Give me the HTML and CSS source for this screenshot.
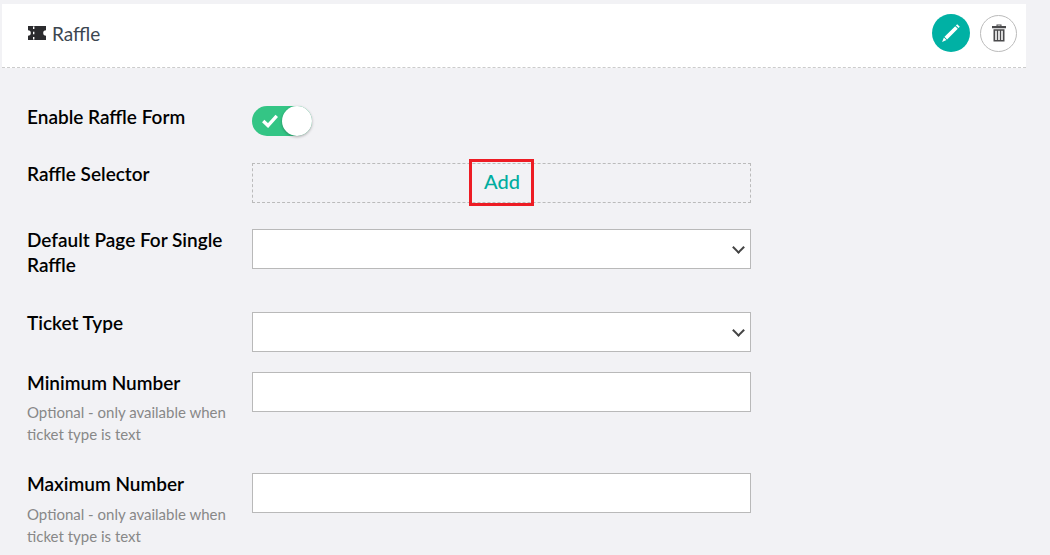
FILE: index.html
```html
<!DOCTYPE html>
<html lang="en">

<head>
    <meta charset="UTF-8">
    <title>Raffle</title>
    <link rel="stylesheet" href="styles.css">
</head>

<body>
    <div class="panel">
        <div class="panel-header">
            <div class="panel-title">
                <svg class="ticket-icon" width="20" height="16" viewBox="0 0 20 16">
                    <path fill="#2b2b2e" d="M1 1h18v4.200a2.800 2.800 0 0 0 0 5.600V15H1v-4.200a2.800 2.800 0 0 0 0-5.600z"/>
                    <path fill="#fff" d="M6 1.500h1.400v2.600H6zM6 6.700h1.400v2.600H6zM6 11.900h1.400v2.600H6z"/>
                </svg>
                <span>Raffle</span>
            </div>
            <div class="panel-actions">
                <button class="round-btn edit-btn" type="button" aria-label="Edit">
                    <svg width="20" height="20" viewBox="0 0 20 20">
                        <path fill="#fff" d="M16.200 1.200l2.600 2.600-1.300 1.300-2.600-2.600zM14.200 3.200l2.600 2.600L6.100 16.400l-2.600-2.600zM2.900 14.500l2.600 2.600-4.400 1.800z"/>
                    </svg>
                </button>
                <button class="round-btn delete-btn" type="button" aria-label="Delete">
                    <svg width="14" height="18" viewBox="0 0 14 18">
                        <path fill="#4a4a4c" d="M4.500 2V.5h5V2H14v2.300H0V2zM5.500 2h3v-.6h-3z"/>
                        <path fill="#4a4a4c" fill-rule="evenodd" d="M1.500 5.300h11V17.500h-11zM3.200 6.800v9.200h1.600V6.800zM6.200 6.800v9.200h1.600V6.800zM9.200 6.800v9.200h1.600V6.800z"/>
                    </svg>
                </button>
            </div>
        </div>

        <form class="form">
            <div class="row row-toggle">
                <div class="label-col"><label class="field-label">Enable Raffle Form</label></div>
                <div class="toggle">
                    <svg class="toggle-check" width="16" height="14" viewBox="0 0 16 14">
                        <path fill="none" stroke="#fff" stroke-width="3.400" d="M1.200 7l4.800 4.600L14.800 1.800"/>
                    </svg>
                    <span class="toggle-knob"></span>
                </div>
            </div>

            <div class="row row-selector">
                <div class="label-col"><label class="field-label">Raffle Selector</label></div>
                <div class="add-box"><a class="add-link" href="#">Add</a></div>
            </div>

            <div class="row row-page">
                <div class="label-col"><label class="field-label">Default Page For Single Raffle</label></div>
                <div class="select-box"><select class="field"></select></div>
            </div>

            <div class="row">
                <div class="label-col"><label class="field-label">Ticket Type</label></div>
                <div class="select-box"><select class="field"></select></div>
            </div>

            <div class="row row-number">
                <div class="label-col">
                    <label class="field-label">Minimum Number</label>
                    <p class="help">Optional - only available when ticket type is text</p>
                </div>
                <input class="field" type="text">
            </div>

            <div class="row row-number">
                <div class="label-col">
                    <label class="field-label">Maximum Number</label>
                    <p class="help">Optional - only available when ticket type is text</p>
                </div>
                <input class="field" type="text">
            </div>
        </form>
    </div>
</body>

</html>
```

FILE: styles.css
```css
html,
body {
    height: 555px;
    overflow: hidden;
}

body {
    margin: 0;
    background-color: #f2f2f5;
    font-family: Lato, sans-serif;
    color: #000;
}

.panel {
    width: 1024px;
    margin: 4px 0 0 2px;
}

.panel-header {
    display: flex;
    align-items: center;
    justify-content: space-between;
    box-sizing: border-box;
    height: 64px;
    padding: 0 9px 5px 25px;
    background-color: #fff;
    border-bottom: 1px dashed #ccc;
}

.panel-title {
    display: flex;
    align-items: center;
    gap: 5px;
    font-size: 19px;
    color: #3c4650;
}

.panel-actions {
    display: flex;
    align-items: center;
    gap: 10px;
}

.round-btn {
    display: flex;
    align-items: center;
    justify-content: center;
    box-sizing: border-box;
    padding: 0;
    border-radius: 50%;
    cursor: pointer;
}

.edit-btn {
    width: 38px;
    height: 38px;
    background-color: #00b1a4;
    border: none;
}

.delete-btn {
    width: 37px;
    height: 37px;
    background-color: #fff;
    border: 1px solid #bbb;
}

.form {
    padding: 38px 0 0 25px;
}

.row {
    display: flex;
    margin-bottom: 20px;
}

.row-toggle {
    margin-bottom: 27px;
}

.row-selector {
    margin-bottom: 26px;
}

.row-page {
    min-height: 63px;
}

.row-number {
    margin-bottom: 28px;
}

.label-col {
    flex: none;
    width: 225px;
    box-sizing: border-box;
    padding-right: 20px;
}

.field-label {
    display: block;
    font-size: 19px;
    font-weight: 600;
    line-height: 25px;
    margin-top: -2px;
}

.help {
    margin: 6.400px 0 0;
    font-size: 15px;
    line-height: 22px;
    color: #888;
}

.toggle {
    position: relative;
    width: 60px;
    height: 30px;
    border-radius: 15px;
    background-color: #34c585;
}

.toggle-check {
    position: absolute;
    top: 8px;
    left: 10px;
}

.toggle-knob {
    position: absolute;
    top: 0;
    right: 0;
    width: 30px;
    height: 30px;
    border-radius: 50%;
    background-color: #fff;
    box-shadow: 0 1px 3px rgba(0, 0, 0, 0.3);
}

.add-box {
    display: flex;
    justify-content: center;
    box-sizing: border-box;
    width: 499px;
    height: 40px;
    border: 1px dashed #bbb;
}

.add-link {
    display: block;
    box-sizing: border-box;
    width: 65px;
    height: 47px;
    line-height: 38px;
    margin-top: -5px;
    padding-left: 1px;
    text-align: center;
    border: 3px solid #ed1c24;
    font-size: 20px;
    font-weight: 500;
    color: #00ad9f;
    text-decoration: none;
}

.select-box {
    position: relative;
}

.select-box::after {
    content: "";
    position: absolute;
    top: 14px;
    right: 8px;
    width: 7px;
    height: 7px;
    border-right: 2px solid #444;
    border-bottom: 2px solid #444;
    transform: rotate(45deg);
    pointer-events: none;
}

.field {
    display: block;
    box-sizing: border-box;
    width: 499px;
    height: 40px;
    padding: 0 10px;
    background-color: #fff;
    border: 1px solid #b9b9b9;
    border-radius: 0;
    appearance: none;
}
```
